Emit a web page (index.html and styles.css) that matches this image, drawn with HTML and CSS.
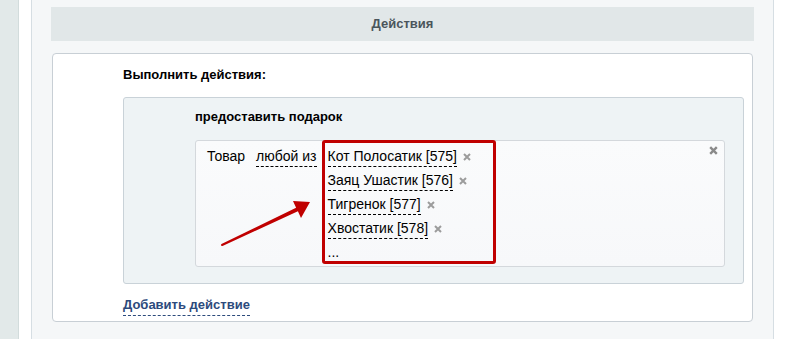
FILE: index.html
```html
<!DOCTYPE html>
<html lang="ru">
<head>
    <meta charset="UTF-8">
    <meta name="viewport" content="width=device-width, initial-scale=1.0">
    <title>Действия</title>
    <link rel="stylesheet" href="styles.css">
</head>
<body>
    <div class="page">
        <div class="side"></div>
        <div class="spacer"></div>
        <div class="panel">
            <div class="panel-head">Действия</div>
            <div class="card">
                <div class="card-title">Выполнить действия:</div>
                <div class="action">
                    <div class="action-title">предоставить подарок</div>
                    <div class="cond">
                        <span class="cond-label">Товар</span>
                        <span class="cond-mode">любой из</span>
                        <div class="items">
                            <div class="item"><span class="item-name">Кот Полосатик [575]</span><svg class="del" width="8" height="8" viewBox="0 0 8 8"><path d="M1 1L7 7M7 1L1 7"/></svg></div>
                            <div class="item"><span class="item-name">Заяц Ушастик [576]</span><svg class="del" width="8" height="8" viewBox="0 0 8 8"><path d="M1 1L7 7M7 1L1 7"/></svg></div>
                            <div class="item"><span class="item-name">Тигренок [577]</span><svg class="del" width="8" height="8" viewBox="0 0 8 8"><path d="M1 1L7 7M7 1L1 7"/></svg></div>
                            <div class="item"><span class="item-name">Хвостатик [578]</span><svg class="del" width="8" height="8" viewBox="0 0 8 8"><path d="M1 1L7 7M7 1L1 7"/></svg></div>
                            <div class="more">...</div>
                        </div>
                        <svg class="close" width="9" height="9" viewBox="0 0 9 9"><path d="M1.2 1.2L7.8 7.8M7.8 1.2L1.2 7.8"/></svg>
                        <!-- annotation arrow -->
                        <svg class="arrow" width="530" height="128" viewBox="0 0 530 128">
                            <path d="M26.5 104.1 L101.1 67.7 L98 61 L115 62 L106 78 L102.9 71.3 L27.5 105.9 Z"/>
                            <circle cx="27" cy="105" r="1"/>
                        </svg>
                    </div>
                </div>
                <div class="add"><span class="add-link">Добавить действие</span></div>
            </div>
        </div>
        <div class="edge"></div>
    </div>
</body>
</html>
```

FILE: styles.css
```css
body {
    margin: 0;
    font-family: "Liberation Sans", Arial, sans-serif;
    font-size: 13px;
    line-height: 16px;
    color: #000;
    background: #fff;
}
.page {
    display: flex;
    height: 339px;
    overflow: hidden;
}
.side {
    width: 18px;
    background: #e2e9e9;
    border-right: 1px solid #d2dcdc;
}
.spacer {
    width: 12px;
    background: #fff;
}
.panel {
    width: 703px;
    padding: 7px 19px 0 19px;
    background: #f5f7f8;
    border-left: 1px solid #d6dee3;
    border-right: 1px solid #d6dee3;
}
.edge {
    flex: 1;
    background: #fff;
}
.panel-head {
    height: 34px;
    line-height: 34px;
    background: #e1e7e8;
    color: #4a555b;
    font-weight: bold;
    text-align: center;
}
.card {
    margin: 12px 1px 0 1px;
    padding: 13px 8px 5px 70px;
    background: #fff;
    border: 1px solid #c8cfd5;
    border-radius: 4px;
}
.card-title {
    font-weight: bold;
}
.action {
    margin-top: 14px;
    padding: 11px 18px 16px 71px;
    background: #eef3f5;
    border: 1px solid #c9d2d8;
    border-radius: 3px;
}
.action-title {
    font-weight: bold;
}
.cond {
    position: relative;
    display: flex;
    align-items: flex-start;
    margin-top: 15px;
    padding: 0 0 2px 11px;
    background: linear-gradient(#fafbfc, #f7f8fa);
    border: 1px solid #d4d8dc;
    border-radius: 3px;
    font-size: 14px;
}
.cond-label {
    margin-top: 7px;
}
.cond-mode {
    margin: 7px 0 0 11px;
    padding-bottom: 2px;
    border-bottom: 1px dashed #000;
}
.items {
    box-sizing: border-box;
    width: 174px;
    margin: -1px 0 0 5px;
    padding: 5px 0 1px 3px;
    border: 3px solid #c00000;
    border-radius: 3px;
}
.item {
    display: flex;
    align-items: flex-start;
    margin-bottom: 5px;
}
.item-name {
    padding-bottom: 2px;
    border-bottom: 1px dashed #000;
    white-space: nowrap;
}
.del {
    margin: 5px 0 0 6px;
    flex: none;
}
.del path {
    stroke: #9c9c9c;
    stroke-width: 2;
}
.close {
    position: absolute;
    top: 5px;
    right: 6px;
}
.close path {
    stroke: #8a8a8a;
    stroke-width: 2.4;
}
.arrow {
    position: absolute;
    left: -1px;
    top: -1px;
    pointer-events: none;
}
.arrow path,
.arrow circle {
    fill: #c00000;
}
.add {
    margin-top: 13px;
}
.add-link {
    display: inline-block;
    padding-bottom: 2px;
    color: #2c4a7c;
    font-weight: bold;
    border-bottom: 1px dashed #2c4a7c;
}
```
